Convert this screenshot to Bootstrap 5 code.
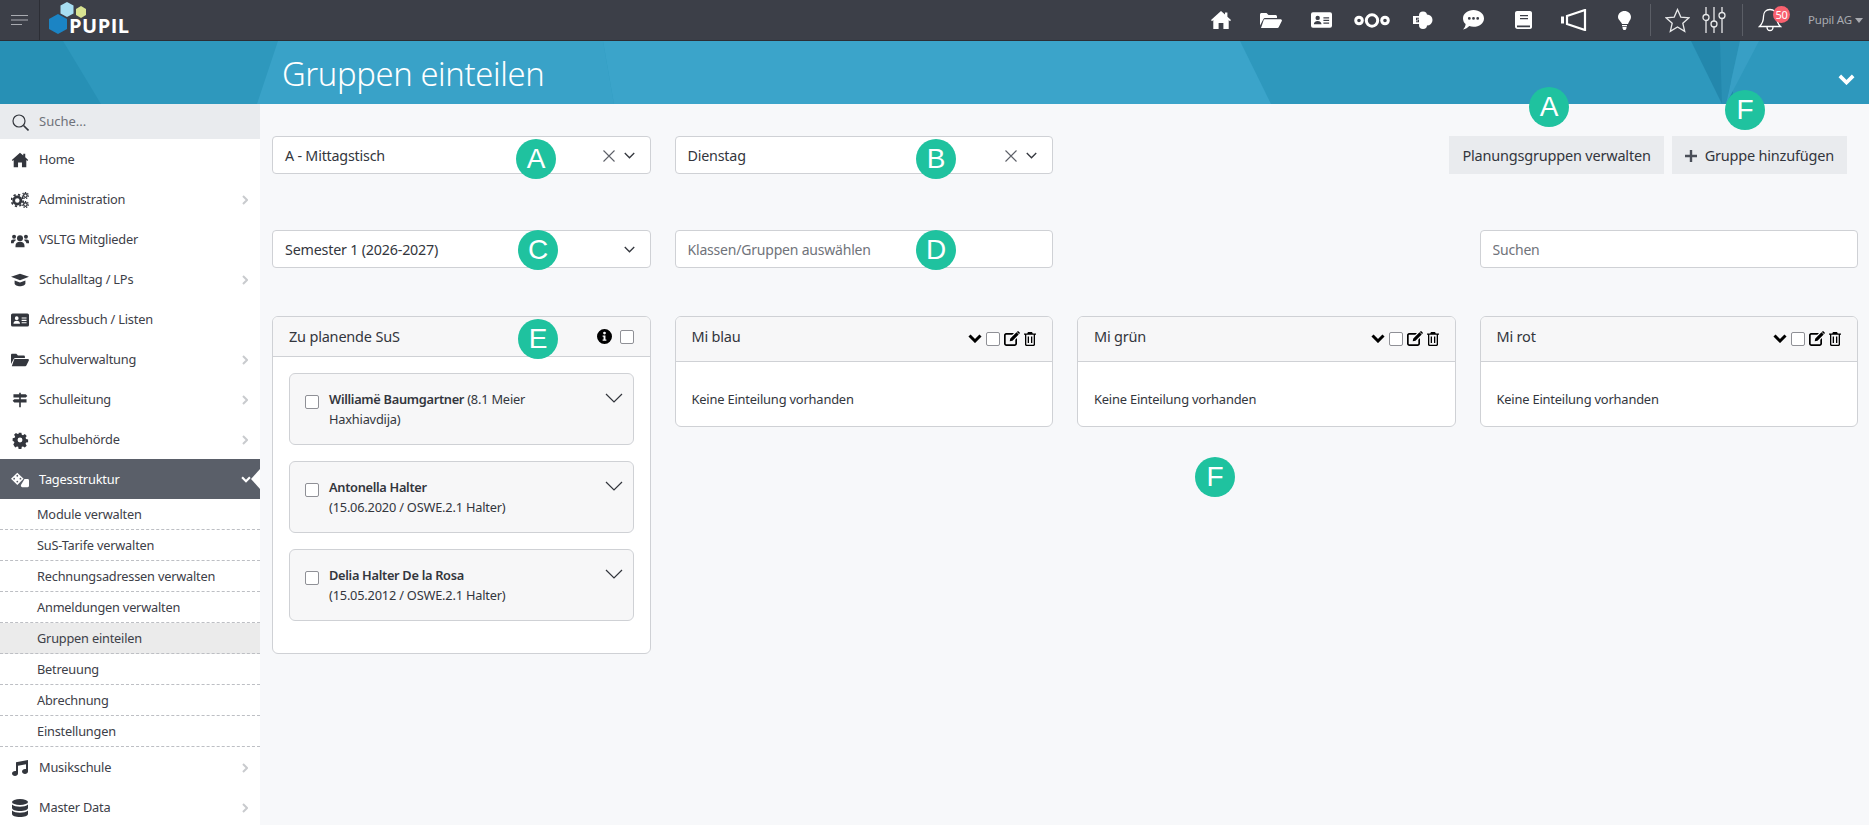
<!DOCTYPE html>
<html lang="de">
<head>
<meta charset="utf-8">
<title>Gruppen einteilen</title>
<link href="https://cdn.jsdelivr.net/npm/bootstrap@5.3.0/dist/css/bootstrap.min.css" rel="stylesheet">
<style>
html,body{height:825px;overflow:hidden}
body{font-family:"Noto Sans",sans-serif;font-size:12.8px;letter-spacing:-.2px;color:#3d4048;background:#f7f8fa}
.topbar{height:41px;background:#3c3f48;border-bottom:1px solid #2c2e35;color:#fff}
.burger{width:40px;height:40px;border-right:1px solid #2c2e35;flex:none}
.logo-wrap{width:90px;height:40px;position:relative;flex:none}
.logo-text{position:absolute;left:29px;top:15px;font:700 20px/22px "Open Sans",sans-serif;letter-spacing:.5px;color:#fff}
.logo-hexes{position:absolute;left:8px;top:1px}
.slot{width:50.5px;height:40px;flex:none}
.topsep{width:1px;height:32px;background:#5b5e66;flex:none}
.starbox{width:53px}
.sliderbox{width:24px;margin-left:-2px;margin-right:16px}
.notif{width:65px;height:40px;position:relative;flex:none}
.bellmark{margin-left:15px}
.notif-count{position:absolute;left:30px;top:6px;width:17px;height:17px;border-radius:50%;background:#f9616f;color:#fff;font-size:11px;line-height:17px;text-align:center;letter-spacing:-.3px}
.usermenu{color:#a9abb1;font-size:11.5px;width:61px;flex:none}
.usercaret{width:0;height:0;border-left:4px solid transparent;border-right:4px solid transparent;border-top:5px solid #a9abb1;margin-left:3px}
.banner{height:63px;background:#2e98bd;position:relative;overflow:hidden}
.banner-art{position:absolute;left:0;top:0}
.banner-title{position:relative;margin:0;padding:3px 0 0 282px;font-size:32.7px;font-weight:300;line-height:60px;color:#fff;letter-spacing:-.35px}
.banner-chev{position:absolute;right:14px;top:33px}
.shell{height:721px}
.sidenav{width:260px;flex:none;background:#fff;overflow:hidden}
.sidesearch{height:35px;background:#e9ebee;color:#6f727a;padding:1px 0 0 12px}
.sidesearch input{border:0;background:transparent;font-size:13px;padding:0;margin-left:10px;width:180px;outline:0;color:#6f727a}
.sidesearch input::placeholder{color:#6f727a;opacity:1}
.menu-row{height:40px;padding:1px 12px 0 11px;color:#3d4048}
.menu-ico{width:18px;height:18px;flex:none;margin-right:10px;fill:#33363d}
.menu-more{margin-left:auto}
.menu-on{background:#5a5f69;color:#fff;position:relative}
.menu-on .menu-ico{fill:#fff}
.menu-on .menu-more{margin-right:-3px}
.menu-notch{position:absolute;right:0;top:10px;width:0;height:0;border-top:10px solid transparent;border-bottom:10px solid transparent;border-right:9px solid #fff}
.sub-row{height:31px;padding:1px 0 0 37px;border-bottom:1px dashed #bdbfc4;color:#3d4048;font-size:12.75px}
.sub-on{background:#ebebeb}
.workspace{flex:1 1 auto;min-width:0;padding:32px 11px 0 12px;position:relative}
.tallrow{height:94px}
.tallrow-b{height:86px}
.fakeinput{height:38px;background:#fff;border:1px solid #cfd1d5;border-radius:4px;padding:1px 15px 0 12px;font-size:14.3px;color:#33363d}
.fakeinput input{border:0;outline:0;background:transparent;padding:0;font-size:14px;width:100%;letter-spacing:-.2px}
.fakeinput input::placeholder{color:#70737a;opacity:1}
.pickclose{margin-left:auto;margin-right:9px}
.actions{padding-right:23px}
.btn-soft{height:38px;background:#e9ebee;border:0;border-radius:0;color:#33363d;font-size:14.5px;padding:1px 13px 0;letter-spacing:-.2px}
.panel{border:1px solid #cfd1d5;border-radius:6px;background:#fff;overflow:hidden}
.panel-head{background:#f7f7f8;border-bottom:1px solid #cfd1d5;padding:0 16px;font-size:14.5px;color:#33363d}
.head-a{height:40px}
.head-b{height:45px;padding-top:8px}
.head-b .panel-name{line-height:22px}
.tools{margin-left:auto;padding-top:6px;align-self:flex-start}
.list-body{padding:16px 16px 32px}
.list-body .kid:last-child{margin-bottom:0}
.empty-body{height:64px;padding:11px 16px 0;color:#33363d;font-size:12.9px}
.kid{background:#f7f7f8;border:1px solid #cfd1d5;border-radius:6px;height:72px;padding:15px 10px 0 15px;margin-bottom:16px;font-size:12.8px;line-height:20px;color:#33363d}
.kid strong{font-weight:600;letter-spacing:-.3px}
.tick{appearance:none;-webkit-appearance:none;width:14px;height:14px;border:1px solid #8f9096;border-radius:2px;background:#fff;flex:none;margin:0}
.kid .tick{margin:6px 10px 0 0}
.pin{position:absolute;width:40px;height:40px;border-radius:50%;background:#1fc29f;color:#fff;font:400 28px/40px "Liberation Sans",sans-serif;text-align:center;letter-spacing:0}
</style>
</head>
<body>
<svg width="0" height="0" class="position-absolute">
  <symbol id="i-home" viewBox="-1 -1 22 20"><path d="M10 0l4 3.600V1.500h2.400v4.200L20 9l-1 1.200-1.300-1.100V18h-5.300v-6H7.600v6H2.300V9.100L1 10.200 0 9z"/></symbol>
  <symbol id="i-folder" viewBox="0 0 22 15"><path d="M0 1.500C0 .7.700 0 1.500 0h5l2 2h7c.8 0 1.500.7 1.500 1.500V5H5.500c-1 0-1.800.5-2.200 1.300L0 12.500zM4.500 6.200h16c1 0 1.700 1 1.300 1.900l-3 6c-.2.500-.8.900-1.300.9H1l2.700-7.900c.1-.5.500-.9.800-.9z"/></symbol>
  <symbol id="i-card" viewBox="0 0 22 16"><path fill-rule="evenodd" d="M2 0h18a2 2 0 0 1 2 2v12a2 2 0 0 1-2 2H2a2 2 0 0 1-2-2V2a2 2 0 0 1 2-2zM7 3.500a2.300 2.300 0 1 0 0 4.600 2.300 2.300 0 0 0 0-4.600zM3 12.500h8c0-2-1.500-3.500-4-3.500s-4 1.500-4 3.500zM13 5v1.300h6V5zM13 7.800v1.300h6V7.800zM13 10.600v1.300h6v-1.300z"/></symbol>
  <symbol id="i-book" viewBox="0 0 17 18"><path fill-rule="evenodd" d="M2 0h13c1 0 2 .8 2 2v14c0 1.100-1 2-2 2H2.500C1 18 0 17 0 15.500V2c0-1.200 1-2 2-2zM5 4v1.300h8V4zM5 7v1.300h8V7zM2 14.500v1.800h13v-1.800z"/></symbol>
  <symbol id="i-gears" viewBox="0 0 20 18"><circle cx="7" cy="9.500" r="4" fill="none" stroke="currentColor" stroke-width="3"/><circle cx="7" cy="9.500" r="6.500" fill="none" stroke="currentColor" stroke-width="2" stroke-dasharray="2.500 2.600"/><circle cx="16" cy="4" r="2" fill="none" stroke="currentColor" stroke-width="1.500"/><circle cx="16" cy="4" r="3.400" fill="none" stroke="currentColor" stroke-width="1.200" stroke-dasharray="1.500 1.500"/><circle cx="16" cy="14" r="2" fill="none" stroke="currentColor" stroke-width="1.500"/><circle cx="16" cy="14" r="3.400" fill="none" stroke="currentColor" stroke-width="1.200" stroke-dasharray="1.500 1.500"/></symbol>
  <symbol id="i-users" viewBox="0 0 20 16"><circle cx="10" cy="6" r="3.300"/><circle cx="3.400" cy="4.500" r="2.200"/><circle cx="16.600" cy="4.500" r="2.200"/><path d="M5 14.500C5 11.500 7 10 10 10s5 1.500 5 4.500V16H5zM0 10c0-1.500 1-2.500 2.500-2.500h1.800c.4 0 .9.100 1.300.4-1.500 1-2.400 2.200-2.700 3.600H0zM20 10c0-1.500-1-2.500-2.500-2.500h-1.800c-.4 0-.9.100-1.300.4 1.500 1 2.400 2.200 2.700 3.600H20z"/></symbol>
  <symbol id="i-cap" viewBox="0 0 20 14"><path d="M10 0l10 3.500-10 3.800L0 3.500zM4 7.500l6 2.300 6-2.300V11c0 1.700-3 3-6 3s-6-1.300-6-3z"/></symbol>
  <symbol id="i-sign" viewBox="-2 -1 22 20"><path d="M8 0h2v2h6l2 2-2 2H10v2h7v4h-7v6H8v-6H2L0 10l2-2h6V6H1V2h7z"/></symbol>
  <symbol id="i-cog" viewBox="-2 -2 22 22"><path fill-rule="evenodd" d="M7.300 0h3.400l.5 2.500 1.500.7 2.200-1.400 2.300 2.400-1.400 2.100.6 1.500 2.500.5v3.400l-2.500.5-.6 1.500 1.400 2.200-2.300 2.300-2.200-1.400-1.500.6-.5 2.600H7.300l-.5-2.600-1.500-.6-2.200 1.400L.8 14.400l1.400-2.200-.6-1.500L0 10.200V6.800l2.500-.5.600-1.500L1.700 2.700 4 .3l2.200 1.400 1.500-.6zM9 6a3 3 0 1 0 0 6 3 3 0 0 0 0-6z"/></symbol>
  <symbol id="i-dice" viewBox="0 0 20 16"><path fill-rule="evenodd" d="M7 0l7 6.500-7 7-7-7zM7 2.300a1 1 0 1 0 0 2 1 1 0 0 0 0-2zM3.500 5.500a1 1 0 1 0 0 2 1 1 0 0 0 0-2zM10.500 5.500a1 1 0 1 0 0 2 1 1 0 0 0 0-2zM7 8.800a1 1 0 1 0 0 2 1 1 0 0 0 0-2z"/><path d="M15 7h3.500c.8 0 1.500.7 1.500 1.500v6c0 .8-.7 1.500-1.500 1.500h-6c-.8 0-1.500-.7-1.500-1.500v-.9z"/></symbol>
  <symbol id="i-music" viewBox="-1 -1 18 18"><path d="M16 0v11.500c0 1.500-1.500 2.500-3 2.500s-3-1-3-2.500 1.500-2.500 3-2.500c.3 0 .7 0 1 .1V4.200L6 5.700v7.800C6 15 4.500 16 3 16s-3-1-3-2.500S1.500 11 3 11c.3 0 .7 0 1 .1V2.300z"/></symbol>
  <symbol id="i-db" viewBox="-1 0 18 18"><ellipse cx="8" cy="3" rx="8" ry="3"/><path d="M0 5.500C1.500 7.200 5 7.700 8 7.700s6.500-.5 8-2.200V9c0 1.700-3.600 3-8 3s-8-1.300-8-3zM0 11.500c1.500 1.700 5 2.200 8 2.200s6.500-.5 8-2.200V15c0 1.700-3.600 3-8 3s-8-1.300-8-3z"/></symbol>
  <symbol id="i-chev" viewBox="0 0 6 10"><path d="M1 1l4 4-4 4" fill="none" stroke="currentColor" stroke-width="2"/></symbol>
  <symbol id="i-thin" viewBox="0 0 18 10"><path d="M1 1l8 8 8-8" fill="none" stroke="currentColor" stroke-width="1.200"/></symbol>
  <symbol id="i-x" viewBox="0 0 12 12"><path d="M.5.500l11 11M11.500.500l-11 11" fill="none" stroke="currentColor" stroke-width="1.100"/></symbol>
  <symbol id="i-pick" viewBox="0 0 10 6"><path d="M.7.700L5 5l4.300-4.300" fill="none" stroke="currentColor" stroke-width="1.200"/></symbol>
  <symbol id="i-bold" viewBox="0 0 14 9"><path d="M1.500 1.500L7 7l5.500-5.500" fill="none" stroke="currentColor" stroke-width="3"/></symbol>
  <symbol id="i-edit" viewBox="0 0 16 15"><path d="M2 2h8l-1.700 1.700H2.200a.5.500 0 0 0-.5.500v8.600c0 .3.200.5.500.5h8.600c.3 0 .5-.2.500-.5V8.700L13 7v5.500c0 1.400-1 2.500-2.500 2.500h-8C1 15 0 14 0 12.500v-8.500C0 3 1 2 2 2z"/><path d="M12.500 1.300l2.200 2.200L8.500 9.700l-2.800.6.600-2.800zM13.300.500c.4-.4 1-.4 1.400 0l.8.800c.4.400.4 1 0 1.400l-.4.400-2.200-2.200z"/></symbol>
  <symbol id="i-trash" viewBox="0 0 12 14"><path fill-rule="evenodd" d="M4 0h4l.8 1.500H12v1.300h-1V12.500c0 .8-.7 1.500-1.500 1.500h-7C1.700 14 1 13.300 1 12.500V2.800H0V1.500h3.200zM2.300 2.800v9.400c0 .2.200.5.500.5h6.400c.3 0 .5-.3.500-.5V2.800zM3.700 4.500H5v6.500H3.700zM7 4.500h1.300v6.500H7z"/></symbol>
  <symbol id="i-info" viewBox="0 0 16 16"><path fill-rule="evenodd" d="M8 0a8 8 0 1 1 0 16A8 8 0 0 1 8 0zM8 2.800a1.500 1.500 0 1 0 0 3 1.500 1.500 0 0 0 0-3zM6 7v1.300h1v3H6v1.300h4v-1.300H9V7z"/></symbol>
</svg>

<header class="topbar d-flex align-items-center">
  <div class="burger d-flex align-items-center justify-content-center">
    <svg width="17" height="10" viewBox="0 0 17 10" fill="none" stroke="#a9abb1"><path d="M0 .5h17M0 5h17M0 9.500h11"/></svg>
  </div>
  <div class="logo-wrap">
    <svg class="logo-hexes" width="40" height="34" viewBox="0 0 40 34"><path d="M10 13l9 5v10l-9 5-9-5V18z" fill="#1b84c4"/><path d="M19 1l6.500 3.500v8L19 16l-6.500-3.500v-8z" fill="#a8dff2"/><path d="M33 5l5 3v6l-5 3-5-3V8z" fill="#d8e391"/></svg>
    <span class="logo-text">PUPIL</span>
  </div>
  <div class="d-flex align-items-center ms-auto">
    <div class="slot d-flex align-items-center justify-content-center"><svg width="22" height="20" fill="#fff"><use href="#i-home"/></svg></div>
    <div class="slot d-flex align-items-center justify-content-center"><svg width="22" height="15" fill="#fff"><use href="#i-folder"/></svg></div>
    <div class="slot d-flex align-items-center justify-content-center"><svg width="21" height="16" fill="#fff"><use href="#i-card"/></svg></div>
    <div class="slot d-flex align-items-center justify-content-center"><svg width="36" height="15" viewBox="0 0 36 15" fill="none" stroke="#fff" stroke-width="3"><circle cx="18" cy="7.500" r="5.700"/><circle cx="5" cy="7.500" r="3.300"/><circle cx="31" cy="7.500" r="3.300"/></svg></div>
    <div class="slot d-flex align-items-center justify-content-center"><svg width="20" height="18" viewBox="0 0 20 18" fill="#fff"><circle cx="10" cy="4.500" r="4"/><circle cx="14" cy="9" r="5.500"/><circle cx="10" cy="14" r="4"/><path fill-rule="evenodd" d="M0 5h9v8H0zM6 6.800H3v2.600h2v.8H3v1h3V8.400H4v-.6h2z"/></svg></div>
    <div class="slot d-flex align-items-center justify-content-center"><svg width="21" height="20" viewBox="0 0 21 20" fill="#fff"><path fill-rule="evenodd" d="M10.500 0C16.300 0 21 3.700 21 8.400s-4.700 8.400-10.500 8.400c-1.500 0-3-.3-4.200-.7C5 17.500 2.500 19.500 0 19.500c1.500-1.300 2.600-3.200 2.600-5.400C1 12.700 0 10.600 0 8.400 0 3.700 4.700 0 10.500 0zM6.300 7a1.400 1.400 0 1 0 0 2.800 1.400 1.400 0 0 0 0-2.800zM10.500 7a1.400 1.400 0 1 0 0 2.800 1.400 1.400 0 0 0 0-2.800zM14.700 7a1.400 1.400 0 1 0 0 2.800 1.400 1.400 0 0 0 0-2.800z"/></svg></div>
    <div class="slot d-flex align-items-center justify-content-center"><svg width="17" height="18" fill="#fff"><use href="#i-book"/></svg></div>
    <div class="slot d-flex align-items-center justify-content-center"><svg width="26" height="22" viewBox="0 0 26 22" fill="none" stroke="#fff" stroke-width="2.200"><path d="M1.500 7.500v7" stroke-width="3"/><path d="M6 7l18-6v20L6 15z"/></svg></div>
    <div class="slot d-flex align-items-center justify-content-center"><svg width="13" height="19" viewBox="0 0 13 19" fill="#fff"><path d="M6.500 0C10 0 13 2.600 13 6c0 3-2.200 4.300-3 7H4C3.200 10.300 0 9 0 6c0-3.400 3-6 6.500-6zM4 14h5v1.300H4zM4.500 16h4v1.200L7.500 19h-2l-1-1.800z"/></svg></div>
    <div class="topsep"></div>
    <div class="starbox d-flex align-items-center justify-content-center"><svg width="25" height="25" viewBox="0 0 25 25" fill="none" stroke="#e8e9ea" stroke-width="1.300"><path d="M12.500 1.500l3.300 7.600 8.200.7-6.200 5.400 1.900 8.100-7.200-4.300-7.200 4.300 1.900-8.100L1 9.800l8.200-.7z"/></svg></div>
    <div class="sliderbox d-flex align-items-center justify-content-center"><svg width="24" height="26" viewBox="0 0 24 26" fill="none" stroke="#e8e9ea" stroke-width="1.300"><path d="M4 0v7.500M4 13.500V26M12 0v14M12 20v6M20 0v5.500M20 11.500V26"/><circle cx="4" cy="10.500" r="3"/><circle cx="12" cy="17" r="3"/><circle cx="20" cy="8.500" r="3"/></svg></div>
    <div class="topsep"></div>
    <div class="notif d-flex align-items-center">
      <svg class="bellmark" width="24" height="24" viewBox="0 0 24 24" fill="none" stroke="#fff" stroke-width="1.300"><path d="M12 1.500c4 0 6.500 3 6.500 7 0 5 1.500 7.500 4 10H1.500c2.500-2.500 4-5 4-10 0-4 2.500-7 6.500-7zM9 19c0 2 1.300 3.500 3 3.500s3-1.500 3-3.500"/></svg>
      <span class="notif-count">50</span>
    </div>
    <div class="usermenu d-flex align-items-center">Pupil AG<span class="usercaret"></span></div>
  </div>
</header>

<section class="banner">
  <svg class="banner-art" width="1869" height="63" viewBox="0 0 1869 63">
    <path d="M0 0h63l38 63H0z" fill="#2790b5"/>
    <path d="M278 0h325l11 63H257z" fill="#39a2c8"/>
    <path d="M603 0h637l31 63H614z" fill="#3ba4ca"/>
    <path d="M1691 0h29l16 63h-14z" fill="#2387ac"/>
    <path d="M1720 0h20l-14 63h-4z" fill="#2a90b5"/>
    <path d="M1740 0h19l-33 63z" fill="#389fc5"/>
  </svg>
  <h1 class="banner-title">Gruppen einteilen</h1>
  <svg class="banner-chev" width="17" height="11" color="#fff"><use href="#i-bold"/></svg>
</section>

<div class="shell d-flex">
  <nav class="sidenav">
    <div class="sidesearch d-flex align-items-center">
      <svg width="17" height="17" viewBox="0 0 17 17" fill="none" stroke="#33363d" stroke-width="1.200"><circle cx="7" cy="7" r="6"/><path d="M11.500 11.500l5 5" stroke-width="1.600"/></svg>
      <input type="text" placeholder="Suche...">
    </div>
    <div class="menu-row d-flex align-items-center"><svg class="menu-ico"><use href="#i-home"/></svg>Home</div>
    <div class="menu-row d-flex align-items-center"><svg class="menu-ico" color="#33363d"><use href="#i-gears"/></svg>Administration<svg class="menu-more" width="6" height="10" color="#c9cbce"><use href="#i-chev"/></svg></div>
    <div class="menu-row d-flex align-items-center"><svg class="menu-ico"><use href="#i-users"/></svg>VSLTG Mitglieder</div>
    <div class="menu-row d-flex align-items-center"><svg class="menu-ico"><use href="#i-cap"/></svg>Schulalltag / LPs<svg class="menu-more" width="6" height="10" color="#c9cbce"><use href="#i-chev"/></svg></div>
    <div class="menu-row d-flex align-items-center"><svg class="menu-ico"><use href="#i-card"/></svg>Adressbuch / Listen</div>
    <div class="menu-row d-flex align-items-center"><svg class="menu-ico"><use href="#i-folder"/></svg>Schulverwaltung<svg class="menu-more" width="6" height="10" color="#c9cbce"><use href="#i-chev"/></svg></div>
    <div class="menu-row d-flex align-items-center"><svg class="menu-ico"><use href="#i-sign"/></svg>Schulleitung<svg class="menu-more" width="6" height="10" color="#c9cbce"><use href="#i-chev"/></svg></div>
    <div class="menu-row d-flex align-items-center"><svg class="menu-ico"><use href="#i-cog"/></svg>Schulbehörde<svg class="menu-more" width="6" height="10" color="#c9cbce"><use href="#i-chev"/></svg></div>
    <div class="menu-row menu-on d-flex align-items-center"><svg class="menu-ico"><use href="#i-dice"/></svg>Tagesstruktur<svg class="menu-more" width="10" height="7" color="#fff"><use href="#i-bold"/></svg><span class="menu-notch"></span></div>
    <div class="sub-row d-flex align-items-center">Module verwalten</div>
    <div class="sub-row d-flex align-items-center">SuS-Tarife verwalten</div>
    <div class="sub-row d-flex align-items-center">Rechnungsadressen verwalten</div>
    <div class="sub-row d-flex align-items-center">Anmeldungen verwalten</div>
    <div class="sub-row sub-on d-flex align-items-center">Gruppen einteilen</div>
    <div class="sub-row d-flex align-items-center">Betreuung</div>
    <div class="sub-row d-flex align-items-center">Abrechnung</div>
    <div class="sub-row d-flex align-items-center">Einstellungen</div>
    <div class="menu-row d-flex align-items-center"><svg class="menu-ico"><use href="#i-music"/></svg>Musikschule<svg class="menu-more" width="6" height="10" color="#c9cbce"><use href="#i-chev"/></svg></div>
    <div class="menu-row d-flex align-items-center"><svg class="menu-ico"><use href="#i-db"/></svg>Master Data<svg class="menu-more" width="6" height="10" color="#c9cbce"><use href="#i-chev"/></svg></div>
  </nav>

  <main class="workspace">
    <div class="row tallrow">
      <div class="col-3"><div class="fakeinput d-flex align-items-center">A - Mittagstisch<svg class="pickclose" width="12" height="12" color="#5d6068"><use href="#i-x"/></svg><svg width="11" height="7" color="#33363d"><use href="#i-pick"/></svg></div></div>
      <div class="col-3"><div class="fakeinput d-flex align-items-center">Dienstag<svg class="pickclose" width="12" height="12" color="#5d6068"><use href="#i-x"/></svg><svg width="11" height="7" color="#33363d"><use href="#i-pick"/></svg></div></div>
      <div class="col-6 actions d-flex justify-content-end align-items-start gap-2">
        <button type="button" class="btn btn-soft">Planungsgruppen verwalten</button>
        <button type="button" class="btn btn-soft d-flex align-items-center"><svg class="me-2" width="12" height="12" viewBox="0 0 12 12" fill="#4a4e58"><path d="M4.800 0h2.400v4.800H12v2.400H7.200V12H4.800V7.200H0V4.800h4.800z"/></svg>Gruppe hinzufügen</button>
      </div>
    </div>
    <div class="row tallrow tallrow-b">
      <div class="col-3"><div class="fakeinput d-flex align-items-center">Semester 1 (2026-2027)<svg class="ms-auto" width="11" height="7" color="#33363d"><use href="#i-pick"/></svg></div></div>
      <div class="col-3"><div class="fakeinput d-flex align-items-center"><input type="text" placeholder="Klassen/Gruppen auswählen"></div></div>
      <div class="col-3"></div>
      <div class="col-3"><div class="fakeinput d-flex align-items-center"><input type="text" placeholder="Suchen"></div></div>
    </div>
    <div class="row align-items-start">
      <div class="col-3">
        <div class="panel">
          <div class="panel-head head-a d-flex align-items-center">
            <span>Zu planende SuS</span>
            <svg class="ms-auto me-2" width="15" height="15"><use href="#i-info"/></svg>
            <input class="tick" type="checkbox" aria-label="Alle wählen">
          </div>
          <div class="list-body">
            <div class="kid d-flex">
              <input class="tick" type="checkbox" aria-label="Williamë Baumgartner">
              <div class="flex-grow-1"><strong>Williamë Baumgartner</strong> (8.1 Meier<br>Haxhiavdija)</div>
              <svg width="18" height="10" class="mt-1" color="#33363d"><use href="#i-thin"/></svg>
            </div>
            <div class="kid d-flex">
              <input class="tick" type="checkbox" aria-label="Antonella Halter">
              <div class="flex-grow-1"><strong>Antonella Halter</strong><br>(15.06.2020 / OSWE.2.1 Halter)</div>
              <svg width="18" height="10" class="mt-1" color="#33363d"><use href="#i-thin"/></svg>
            </div>
            <div class="kid d-flex">
              <input class="tick" type="checkbox" aria-label="Delia Halter De la Rosa">
              <div class="flex-grow-1"><strong>Delia Halter De la Rosa</strong><br>(15.05.2012 / OSWE.2.1 Halter)</div>
              <svg width="18" height="10" class="mt-1" color="#33363d"><use href="#i-thin"/></svg>
            </div>
          </div>
        </div>
      </div>
      <div class="col-3">
        <div class="panel">
          <div class="panel-head head-b d-flex"><span class="panel-name">Mi blau</span><div class="tools d-flex align-items-center gap-1"><svg width="14" height="9" color="#000"><use href="#i-bold"/></svg><input class="tick" type="checkbox" aria-label="Mi blau"><svg width="16" height="15" fill="#000"><use href="#i-edit"/></svg><svg width="12" height="14" fill="#000"><use href="#i-trash"/></svg></div></div>
          <div class="empty-body d-flex align-items-center">Keine Einteilung vorhanden</div>
        </div>
      </div>
      <div class="col-3">
        <div class="panel">
          <div class="panel-head head-b d-flex"><span class="panel-name">Mi grün</span><div class="tools d-flex align-items-center gap-1"><svg width="14" height="9" color="#000"><use href="#i-bold"/></svg><input class="tick" type="checkbox" aria-label="Mi grün"><svg width="16" height="15" fill="#000"><use href="#i-edit"/></svg><svg width="12" height="14" fill="#000"><use href="#i-trash"/></svg></div></div>
          <div class="empty-body d-flex align-items-center">Keine Einteilung vorhanden</div>
        </div>
      </div>
      <div class="col-3">
        <div class="panel">
          <div class="panel-head head-b d-flex"><span class="panel-name">Mi rot</span><div class="tools d-flex align-items-center gap-1"><svg width="14" height="9" color="#000"><use href="#i-bold"/></svg><input class="tick" type="checkbox" aria-label="Mi rot"><svg width="16" height="15" fill="#000"><use href="#i-edit"/></svg><svg width="12" height="14" fill="#000"><use href="#i-trash"/></svg></div></div>
          <div class="empty-body d-flex align-items-center">Keine Einteilung vorhanden</div>
        </div>
      </div>
    </div>
  </main>
</div>

<span class="pin" style="left:516px;top:139px">A</span>
<span class="pin" style="left:916px;top:139px">B</span>
<span class="pin" style="left:518px;top:230px">C</span>
<span class="pin" style="left:916px;top:230px">D</span>
<span class="pin" style="left:518px;top:319px">E</span>
<span class="pin" style="left:1195px;top:457px">F</span>
<span class="pin" style="left:1529px;top:87px">A</span>
<span class="pin" style="left:1725px;top:90px">F</span>
<script src="https://cdn.jsdelivr.net/npm/bootstrap@5.3.0/dist/js/bootstrap.bundle.min.js"></script>
</body>
</html>
